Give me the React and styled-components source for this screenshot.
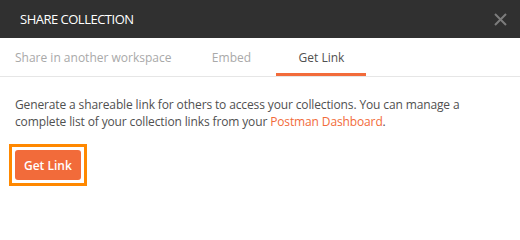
import React, { useState } from 'react'
import styled, { createGlobalStyle } from 'styled-components'

const GlobalStyle = createGlobalStyle`
  html, body {
    margin: 0;
    padding: 0;
    background: #ffffff;
  }
  body {
    font-family: "Open Sans", "Liberation Sans", sans-serif;
  }
`

const Modal = styled.div`
  width: 520px;
  height: 201px;
  background: #ffffff;
  display: flex;
  flex-direction: column;
`

const Header = styled.div`
  height: 40px;
  background: #303030;
  display: flex;
  align-items: center;
  justify-content: space-between;
  padding: 0 9px 0 20px;
  box-sizing: border-box;
`

const Title = styled.div`
  color: #ffffff;
  font-size: 13px;
  letter-spacing: -0.5px;
`

const CloseButton = styled.button`
  background: none;
  border: 0;
  padding: 0;
  width: 22px;
  height: 22px;
  display: flex;
  align-items: center;
  justify-content: center;
  cursor: pointer;
  svg {
    stroke: #7c7c7c;
  }
`

const TabBar = styled.div`
  display: flex;
  height: 41px;
  border-bottom: 1px solid #e6e6e6;
  box-sizing: border-box;
`

const Tab = styled.div`
  min-width: 90px;
  padding: 3px 15px 0;
  box-sizing: border-box;
  display: flex;
  align-items: center;
  justify-content: center;
  font-size: 12px;
  color: ${(p) => (p.$active ? '#505050' : '#a9a9a9')};
  border-bottom: 3px solid ${(p) => (p.$active ? '#f26b3a' : 'transparent')};
  cursor: pointer;
`

const Body = styled.div`
  padding: 19px 25px 15px 15px;
  display: flex;
  flex-direction: column;
  align-items: flex-start;
  gap: 14px;
`

const Text = styled.p`
  margin: 0;
  font-size: 12px;
  letter-spacing: -0.13px;
  line-height: 17px;
  color: #505050;
  a {
    color: #f26b3a;
    text-decoration: none;
  }
`

const FocusRing = styled.span`
  display: inline-flex;
  margin-left: -6px;
  padding: 3px;
  border: 3px solid #ff8800;
`

const PrimaryButton = styled.button`
  height: 30px;
  padding: 0 9px;
  border: 0;
  border-radius: 3px;
  background: #f26b3a;
  color: #ffffff;
  font-family: inherit;
  font-size: 12px;
  font-weight: 600;
  outline: none;
  cursor: pointer;
`

const tabs = ['Share in another workspace', 'Embed', 'Get Link']

export default function App() {
  const [active, setActive] = useState(2)
  return (
    <>
      <GlobalStyle />
      <Modal>
        <Header>
          <Title>SHARE COLLECTION</Title>
          <CloseButton aria-label="Close">
            <svg width="13" height="13" viewBox="0 0 13 13" fill="none" strokeWidth="2">
              <path d="M1 1L12 12M12 1L1 12" />
            </svg>
          </CloseButton>
        </Header>
        <TabBar>
          {tabs.map((t, i) => (
            <Tab key={t} $active={i === active} onClick={() => setActive(i)}>
              {t}
            </Tab>
          ))}
        </TabBar>
        <Body>
          <Text>
            Generate a shareable link for others to access your collections. You can manage a
            complete list of your collection links from your <a href="#">Postman Dashboard</a>.
          </Text>
          <FocusRing>
            <PrimaryButton>Get Link</PrimaryButton>
          </FocusRing>
        </Body>
      </Modal>
    </>
  )
}
